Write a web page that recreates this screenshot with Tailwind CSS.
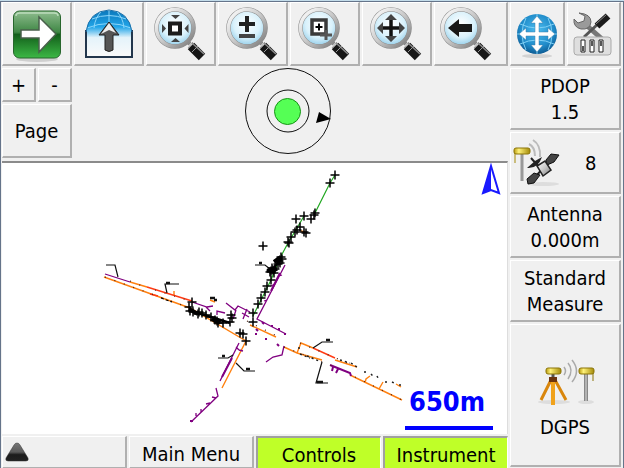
<!DOCTYPE html>
<html lang="en">
<head>
<meta charset="UTF-8">
<meta name="viewport" content="width=device-width, initial-scale=1.0">
<title>Survey Map</title>
<script src="https://cdn.jsdelivr.net/npm/@tailwindcss/browser@4"></script>
</head>
<body class="h-screen flex flex-col bg-[#f0f0f0] text-black text-[20px] leading-[26px] font-['DejaVu_Sans_Condensed','DejaVu_Sans',sans-serif] border-t border-t-[#c3dcea]">

<!-- Shared gradients and the magnifier used by the zoom buttons -->
<svg class="absolute w-0 h-0" aria-hidden="true">
<defs>
<linearGradient id="green" x1="0" y1="0" x2="0" y2="1">
<stop offset="0" stop-color="#8fbd8f"/><stop offset=".45" stop-color="#3f8745"/><stop offset=".5" stop-color="#135f1b"/><stop offset="1" stop-color="#3cb845"/>
</linearGradient>
<linearGradient id="silver" x1="0" y1="0" x2="1" y2="1">
<stop offset="0" stop-color="#fff"/><stop offset=".5" stop-color="#c9c9c9"/><stop offset="1" stop-color="#777"/>
</linearGradient>
<linearGradient id="gold" x1="0" y1="0" x2="1" y2="0">
<stop offset="0" stop-color="#b99b10"/><stop offset=".3" stop-color="#fff27a"/><stop offset="1" stop-color="#a38908"/>
</linearGradient>
<linearGradient id="caret" x1="0" y1="0" x2="0" y2="1">
<stop offset="0" stop-color="#777"/><stop offset=".5" stop-color="#5a5a5a"/><stop offset=".65" stop-color="#1c1c1c"/><stop offset="1" stop-color="#222"/>
</linearGradient>
<radialGradient id="glass" cx=".5" cy=".4" r=".6">
<stop offset="0" stop-color="#fff"/><stop offset=".6" stop-color="#d9f1fb"/><stop offset="1" stop-color="#8ecbe8"/>
</radialGradient>
<radialGradient id="globe" cx=".5" cy=".4" r=".6">
<stop offset="0" stop-color="#4dbdf0"/><stop offset=".7" stop-color="#1f8bc9"/><stop offset="1" stop-color="#0e5c94"/>
</radialGradient>
<linearGradient id="dome" x1="0" y1="0" x2="0" y2="1">
<stop offset="0" stop-color="#0b79bd"/><stop offset=".35" stop-color="#22a5e8"/><stop offset=".58" stop-color="#e4f3fa"/><stop offset="1" stop-color="#fafafa"/>
</linearGradient>
<symbol id="lens" viewBox="0 0 60 60">
<path d="M34 35l5 5" stroke="#888" stroke-width="4"/>
<path d="M40 42l11 11" stroke="#161616" stroke-width="9"/>
<path d="M41 39l12 11" stroke="#8b8b8b" stroke-width="1.5"/>
<path d="M37 44l5-6M41 48l6-6" stroke="#999"/>
<circle cx="24" cy="24" r="18.500" fill="url(#glass)" stroke="#8d8d8d" stroke-width="4.500"/>
<circle cx="24" cy="24" r="18.500" fill="none" stroke="url(#silver)" stroke-width="3.500"/>
</symbol>
</defs>
</svg>

<div class="flex-1 min-h-0 flex border-t border-x border-[#65748a]">

<!-- Toolbar, map and bottom menu -->
<main class="flex-1 min-w-0 flex flex-col pl-px">
<div class="grid grid-cols-[repeat(6,1fr)_74px] gap-0.5 h-16 shrink-0">
<button aria-label="Next" class="flex items-center justify-center border-t border-l border-white border-r-2 border-b-2 border-r-[#b0b0b0] border-b-[#b0b0b0]">
<svg class="w-15 h-15" viewBox="0 0 60 60">
<ellipse cx="30" cy="55" rx="21" ry="3" fill="#cfcfcf"/>
<rect x="6.500" y="7" width="47" height="47" rx="6" fill="url(#green)" stroke="#28662d"/>
<path d="M9 12q0-3 4-3h34q4 0 4 3" fill="none" stroke="#bcdcbc" stroke-width="1.500"/>
<path d="M14 26h18V13l17 17-17 18V34H14z" fill="#fff" stroke="#4a604c" stroke-width="1.500"/>
</svg>
</button>
<button aria-label="World up" class="flex items-center justify-center border-t border-l border-white border-r-2 border-b-2 border-r-[#b0b0b0] border-b-[#b0b0b0]">
<svg class="w-15 h-15" viewBox="0 0 60 60">
<path d="M7 53V27C10 0 50 0 53 27V53z" fill="url(#dome)"/>
<path d="M8 24q22-9 44 0M13 15q17-7 34 0M30 6v16M23 7q-7 6-8 17M37 7q7 6 8 17" fill="none" stroke="#8bd6fa"/>
<path d="M7 26V53H53V26" fill="none" stroke="#22364c" stroke-width="2"/>
<path d="M7 28q3-21 23-22q20 1 23 22" fill="none" stroke="#1c6fa8"/>
<path d="M30 18l10 13h-6v15q-4 3-8 0V31h-6z" fill="#555" stroke="#222"/>
<path d="M30 19l-8 11 8-4 7 3z" fill="#eee"/>
</svg>
</button>
<button aria-label="Zoom extents" class="flex items-center justify-center border-t border-l border-white border-r-2 border-b-2 border-r-[#b0b0b0] border-b-[#b0b0b0]">
<svg class="w-15 h-15" viewBox="0 0 60 60">
<use href="#lens"/>
<rect x="19" y="19.500" width="10" height="10" fill="#fff" stroke="#1c1c1c" stroke-width="4"/>
<path d="M20 11h9l-4.500 4zM20 38h9l-4.500-4zM11 20v9l4-4.500zM37.500 20v9l-4-4.500z" fill="#444"/>
</svg>
</button>
<button aria-label="Zoom in or out" class="flex items-center justify-center border-t border-l border-white border-r-2 border-b-2 border-r-[#b0b0b0] border-b-[#b0b0b0]">
<svg class="w-15 h-15" viewBox="0 0 60 60">
<use href="#lens"/>
<path d="M24 12v16M16 20h16" stroke="#222" stroke-width="4"/>
<path d="M16 32h16" stroke="#444" stroke-width="4"/>
</svg>
</button>
<button aria-label="Zoom window" class="flex items-center justify-center border-t border-l border-white border-r-2 border-b-2 border-r-[#b0b0b0] border-b-[#b0b0b0]">
<svg class="w-15 h-15" viewBox="0 0 60 60">
<use href="#lens"/>
<rect x="17" y="16" width="14" height="14" fill="#fff" stroke="#3a3a3a" stroke-width="3.500"/>
<path d="M31 26v10M25 31h12" stroke="#555" stroke-width="3"/>
<path d="M24 19.500v7M20.500 23h7" stroke="#000" stroke-width="2"/>
</svg>
</button>
<button aria-label="Pan" class="flex items-center justify-center border-t border-l border-white border-r-2 border-b-2 border-r-[#b0b0b0] border-b-[#b0b0b0]">
<svg class="w-15 h-15" viewBox="0 0 60 60">
<use href="#lens"/>
<path d="M24 14v20M14 24h20" stroke="#111" stroke-width="3.500"/>
<path d="M18 16h12l-6-6zM18 32h12l-6 6zM16 18v12l-6-6zM32 18v12l6-6z" fill="#444"/>
</svg>
</button>
<button aria-label="Zoom previous" class="flex items-center pl-0.5 border-t border-l border-white border-r-2 border-b-2 border-r-[#b0b0b0] border-b-[#b0b0b0]">
<svg class="w-15 h-15" viewBox="0 0 60 60">
<use href="#lens"/>
<path d="M11 24l11-9v5h13v8H22v5z" fill="#181818"/>
</svg>
</button>
</div>

<div class="flex h-[95px] shrink-0 pt-0.5">
<div class="grid grid-cols-2 grid-rows-[34px_54px] gap-0.5 w-[70px]">
<button class="border-t border-l border-white border-r-2 border-b-2 border-r-[#b0b0b0] border-b-[#b0b0b0]">+</button>
<button class="border-t border-l border-white border-r-2 border-b-2 border-r-[#b0b0b0] border-b-[#b0b0b0]">-</button>
<button class="col-span-2 border-t border-l border-white border-r-2 border-b-2 border-r-[#b0b0b0] border-b-[#b0b0b0]">Page</button>
</div>
<div class="flex-1 flex justify-center pr-1">
<!-- Level indicator -->
<svg class="w-22 h-22" viewBox="0 0 88 88" fill="none" stroke="#111">
<circle cx="44" cy="43" r="42.500"/>
<circle cx="44" cy="43" r="21"/>
<circle cx="43.500" cy="43.500" r="13" fill="#55ff55" stroke="#149414"/>
<path d="M72 55l3-11 12 7z" fill="#000" stroke="none"/>
</svg>
</div>
</div>

<div class="relative flex-1 min-h-0 bg-white border-t-2 border-t-[#8b8b8b] border-r border-r-[#ddd]">
<svg class="w-full h-full" viewBox="2 163 505 271" fill="none" stroke-width="1.200">
<defs>
<marker id="cross" markerUnits="userSpaceOnUse" markerWidth="11" markerHeight="11" refX="5.500" refY="5.500">
<path d="M5.500 1v9M1 5.500h9" stroke="#000" stroke-width="1.500"/>
</marker>
</defs>
<!-- Green road to the north east -->
<path d="M335 175L330 183L315 213M304 216L297 228L288 243L280 258L271 280L253 316" stroke="#22a822"/>
<!-- Orange kerbs -->
<g stroke="#ff8010" stroke-width="1.400">
<path d="M130 282L147 287M104 277L190 308L246 341L222 388M174 291v4M210 300l5 2M250 325L276 337M284 347L297 353L301 343L313 348M335 360L357 367M297 353L322 360M350 375L402 400M365 383l1-4 4-3M379 389l4-7M396 384l5 3M301 231l4 1"/>
</g>
<path d="M147 287L192 301M313 348L335 358M150 294l8 2" stroke="#ff3b14" stroke-width="1.400"/>
<!-- Purple kerbs -->
<g stroke="#800080" stroke-width="1.300">
<path d="M105 274L130 282M192 302L207 307L213 306M206 307l4 4M217 315v-4l8 2M226 303L235 310L238 306L250 312M233 319l3-9M243 319l4-10M242 313l7 4M285 265L257 319L286 334M282 275l-3 1M275 284l-4 2M267 300l-3 1M266 362L273 357L282 355L284 346M239 343L220 381M236 347l3 3M239 350l4 1M216 388L218 396L191 422M212 397l4 1M210 403l-4 1M201 409v3M196 413v3"/>
<path d="M255 334h2M265 339h2M256 329l2 2M277 344l2 2M262 322l2 2M190 421h3M271 326h2M278 329h2M284 334h2" stroke-width="2"/>
<path d="M330 365L350 373L351 376M333 367l-1 4M338 369l-2 4M232 358L222 377M280 273L271 291" stroke-width="2"/>
</g>
<!-- Dark chainage ticks -->
<path d="M105 277L190 308M130 281l15 6M155 290l32 10M247 321l28 14M284 347L340 369M300 343L350 364M355 377L402 400" stroke="#4a1d10" stroke-dasharray="1 9"/>
<path d="M161 298l11 4" stroke="#000" stroke-dasharray="3 2"/>
<path d="M300 354l10 4M307 356l12 5M365 371v3M371 374l3 3M377 376l2 4M386 381v4M392 382l4 2M400 384v4M298 348h4M351 363l6 4M340 360l10 3" stroke="#222" stroke-width="1.500" stroke-dasharray="2 3"/>
<!-- Leader lines with their tags -->
<g stroke="#111">
<path d="M106 265h9l3 12M179 284h-14l2 9M218 358h10l5-3M236 363l8 8h11M313 348l9-6h11M322 362l-6 21h12M255 265h10l5 4"/>
<path d="M166 283h4M222 356h3M246 369h4M326 340h4M317 382h6M259 263h3M210 298h5M214 300h3" stroke-width="2.500"/>
</g>
<!-- Surveyed points -->
<polyline marker-start="url(#cross)" marker-mid="url(#cross)" marker-end="url(#cross)" points="335,175 330,183 315,213 314,215 311,219 304,216 296,219 300,227 297,230 295,232 306,233 304,232 291,237 288,242 289,243 263,246"/>
<polyline marker-start="url(#cross)" marker-mid="url(#cross)" marker-end="url(#cross)" points="281,257 282,259 279,261 280,263 278,264 275,269 273,270 271,271 274,273 270,272 272,268 271,280 267,286 265,292 261,298 258,304 253,313 253,322"/>
<polyline marker-start="url(#cross)" marker-mid="url(#cross)" marker-end="url(#cross)" points="192,302 189,307 190,311 193,312 198,314 199,312 202,313 206,315 211,317 215,320 217,321 218,323 223,323 230,322 231,315 232,318 240,333 243,334 246,341"/>
<path d="M274 262l7-5M267 271l10-2M189 309l9 5M212 319l8 4" stroke="#000" stroke-width="4"/>
<path d="M198 313l32 10M272 270l9-11" stroke="#000" stroke-width="2.500"/>
<!-- North arrow -->
<path d="M491 166l-8 27 8-3 8 3z" stroke="#1a1aff" stroke-width="2" fill="#fff"/>
<path d="M491 166l-8 27 8-3z" fill="#1a1aff"/>
</svg>
<div class="absolute right-3.5 bottom-1 w-22 pl-1 pb-2 border-b-4 border-b-[#0000ff] text-[#0000ff] text-[27px] leading-8 font-bold">650m</div>
</div>

<div class="grid grid-cols-4 gap-0.5 h-8 mt-0.5 shrink-0">
<button aria-label="Expand" class="flex items-center pl-0.5 border-t border-l border-white border-r-2 border-b-2 border-r-[#b0b0b0] border-b-[#b0b0b0]">
<svg class="w-6 h-5" viewBox="0 0 24 20"><path d="M12 1q2 0 3 2l8 13q1 3-2 3H3q-3 0-2-3L9 3q1-2 3-2z" fill="url(#caret)" stroke="#333" stroke-width=".5"/></svg>
</button>
<button class="pt-1 border-t border-l border-white border-r-2 border-b-2 border-r-[#b0b0b0] border-b-[#b0b0b0]">Main Menu</button>
<button class="pt-0.5 bg-[#bfff28] border-t-2 border-l-2 border-[#a0a0a0] border-r border-r-white">Controls</button>
<button class="pt-0.5 bg-[#bfff28] border-t-2 border-l-2 border-[#a0a0a0] border-r border-r-white">Instrument</button>
</div>
</main>

<!-- Status column -->
<aside class="w-[115px] shrink-0 flex flex-col gap-0.5 pl-0.5 pr-0.5 pb-px">
<div class="grid grid-cols-2 gap-0.5 h-16 shrink-0">
<button aria-label="Pan map" class="flex items-center justify-center border-t border-l border-white border-r-2 border-b-2 border-r-[#b0b0b0] border-b-[#b0b0b0]">
<svg class="w-[50px] h-14" viewBox="0 0 50 56">
<ellipse cx="25" cy="50" rx="15" ry="2" fill="#d2d2d2"/>
<circle cx="25" cy="28" r="20" fill="url(#globe)"/>
<path d="M8 18q17 8 34 0M8 38q17-8 34 0M14 12q-8 16 0 32M36 12q8 16 0 32M5 28h40M25 8v40" fill="none" stroke="#7fd0f5"/>
<path d="M25 10l6 7h-4v9h9v-4l7 6-7 6v-4h-9v9h4l-6 7-6-7h4v-9h-9v4l-7-6 7-6v4h9v-9h-4z" fill="#fff" stroke="#3c7ea8" stroke-width=".5"/>
</svg>
</button>
<button aria-label="Settings" class="flex items-center justify-center border-t border-l border-white border-r-2 border-b-2 border-r-[#b0b0b0] border-b-[#b0b0b0]">
<svg class="w-[50px] h-14" viewBox="0 0 50 56">
<path d="M17 18l17 15" stroke="#777" stroke-width="5"/>
<path d="M11 7l6 3-1 5-6 2-4-4q-1 8 7 10 9 1 10-7 0-8-12-9z" fill="#9a9a9a" stroke="#666"/>
<path d="M16 31l15-14" stroke="#555" stroke-width="3"/>
<path d="M29 20l11-10" stroke="#1a1a1a" stroke-width="7"/>
<path d="M28 18l11-10" stroke="#888"/>
<rect x="6" y="31" width="37" height="18" rx="3" fill="#dedede" stroke="#aaa"/>
<path d="M13 34h4v12h-4zM22 34h4v12h-4zM31 34h4v12h-4z" fill="#fff" stroke="#222"/>
<path d="M14 40h2v5h-2zM23 35h2v5h-2zM32 35h2v5h-2z" fill="#555"/>
</svg>
</button>
</div>
<button class="h-[62px] shrink-0 border-t border-l border-white border-r-2 border-b-2 border-r-[#b0b0b0] border-b-[#b0b0b0]">PDOP<br>1.5</button>
<button class="h-[62px] shrink-0 flex items-center gap-6 pl-0.5 border-t border-l border-white border-r-2 border-b-2 border-r-[#b0b0b0] border-b-[#b0b0b0]">
<svg class="w-12 h-12" viewBox="0 0 48 48" fill="none">
<ellipse cx="30" cy="45" rx="16" ry="2" fill="#ddd"/>
<path d="M9 15v27" stroke="#999" stroke-width="3"/><path d="M2 12v12" stroke="#a38908"/>
<rect x="1" y="9" width="16" height="6" rx="2" fill="url(#gold)" stroke="#8b7508"/>
<path d="M16 5q6 3 6 12M20 1q8 5 7 17" stroke="#bbb" stroke-width="2"/>
<path d="M14 29q11 1 15-11l-7 4z" fill="#222"/>
<path d="M18 19l8 9M20 40l19-20" stroke="#222" stroke-width="2"/>
<path d="M33 21l5-6 8 1-5 7-7 3zM14 40l7-6 6 2-6 8-6 1z" fill="#444" stroke="#111"/>
<path d="M24 27l8-5 6 9-8 6z" fill="url(#silver)" stroke="#222" stroke-width="1.500"/>
</svg>
<span>8</span>
</button>
<button class="h-[62px] shrink-0 border-t border-l border-white border-r-2 border-b-2 border-r-[#b0b0b0] border-b-[#b0b0b0]">Antenna<br>0.000m</button>
<button class="h-[62px] shrink-0 border-t border-l border-white border-r-2 border-b-2 border-r-[#b0b0b0] border-b-[#b0b0b0]">Standard<br>Measure</button>
<button class="flex-1 flex flex-col items-center justify-center gap-2 pt-2 border-t border-l border-white border-r-2 border-b-2 border-r-[#b0b0b0] border-b-[#b0b0b0]">
<svg class="w-15 h-12" viewBox="0 0 60 48" fill="none">
<ellipse cx="19" cy="44" rx="16" ry="2" fill="#ddd"/><ellipse cx="51" cy="44" rx="8" ry="2" fill="#ddd"/>
<path d="M16 22L6 42M20 22l11 20" stroke="#d9860c" stroke-width="3"/>
<path d="M18 20v27" stroke="#f0a21c" stroke-width="4"/>
<path d="M14 19h8v5h-8z" fill="#6b3410"/><path d="M18 15v4" stroke="#555" stroke-width="3"/>
<rect x="11" y="10" width="15" height="6" rx="2" fill="url(#gold)" stroke="#8b7508"/>
<path d="M29 9q3 4 0 8M33 5q6 7 0 16M37 2q9 11 0 22" stroke="#aaa" stroke-width="1.500"/>
<path d="M51 16v27" stroke="#888" stroke-width="4"/><path d="M51 16v27" stroke="#ddd"/>
<rect x="44" y="10" width="15" height="6" rx="2" fill="url(#gold)" stroke="#8b7508"/>
<path d="M58 15v8" stroke="#8b7508"/>
</svg>
<span>DGPS</span>
</button>
</aside>
</div>
</body>
</html>
